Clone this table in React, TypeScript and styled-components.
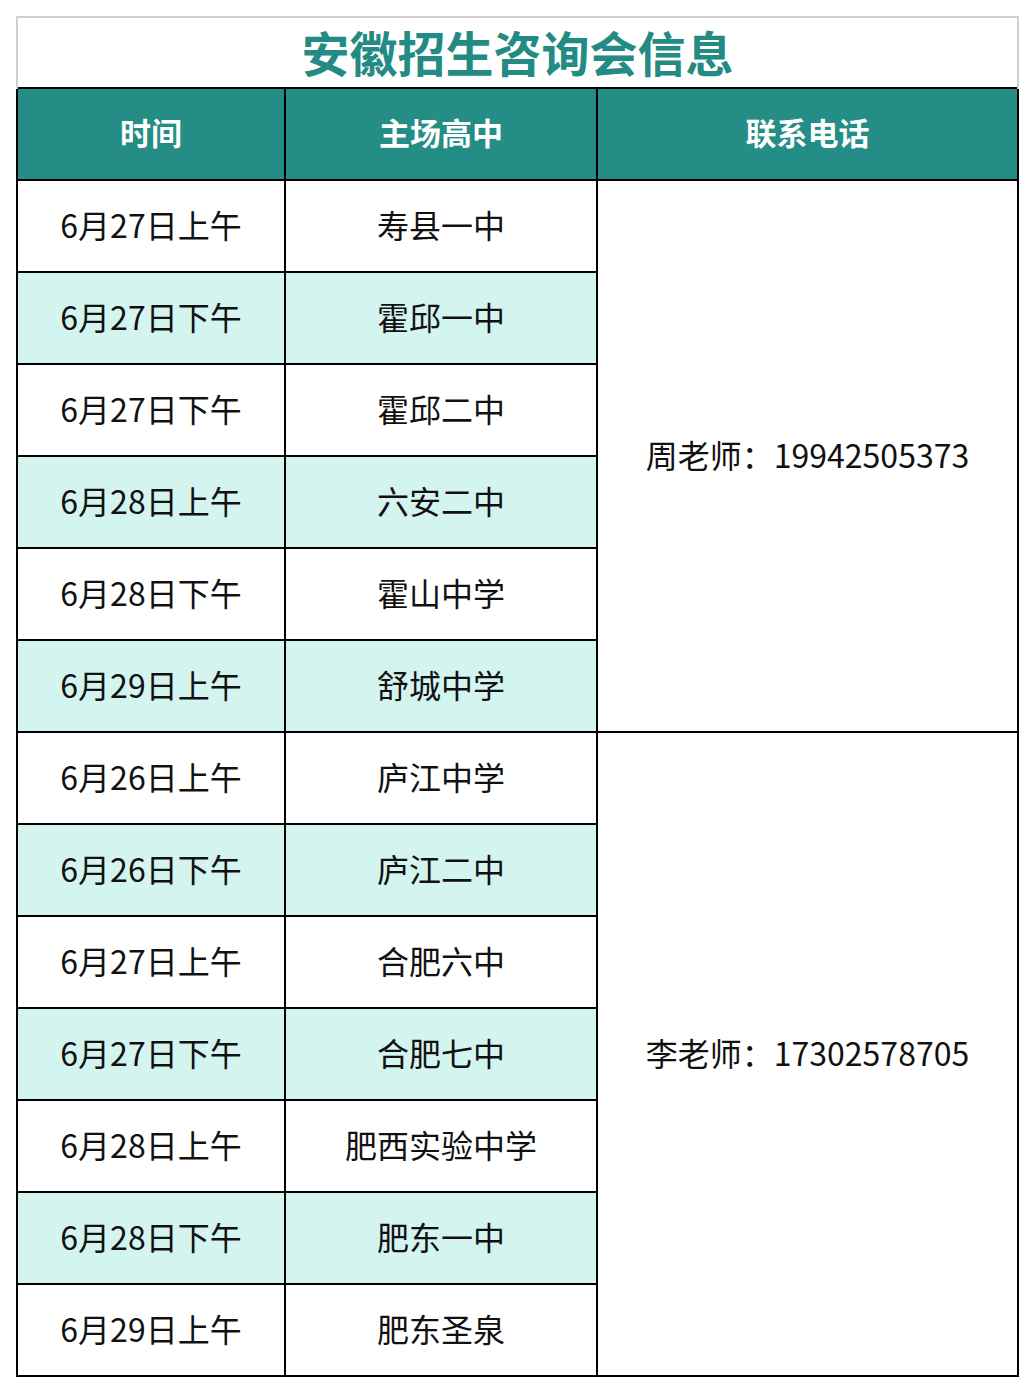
import React from "react";
import styled, { createGlobalStyle } from "styled-components";

const Global = createGlobalStyle`
  html, body { margin: 0; padding: 0; background: #fff; }
  body { font-family: "Noto Sans CJK SC", "Noto Sans", sans-serif; }
`;

const Page = styled.div`
  padding: 16px 0 16px 16px;
  width: 1034px;
  box-sizing: border-box;
`;

const Table = styled.table`
  border-collapse: collapse;
  table-layout: fixed;
  width: 1001px;
`;

const TitleCell = styled.td`
  height: 65px;
  padding: 0 0 4px;
  border: 2px solid #d0d0d0;
  border-bottom: none;
  text-align: center;
  vertical-align: middle;
  color: #238b83;
  font-size: 48px;
  font-weight: 700;
  line-height: 1;
`;

const Th = styled.th`
  height: 85px;
  padding: 0 0 5px;
  border: 2px solid #000;
  background: #248d85;
  color: #fff;
  font-size: 31px;
  font-weight: 700;
  text-align: center;
  vertical-align: middle;
`;

const Td = styled.td<{ $alt?: boolean }>`
  height: 85px;
  padding: 0 0 5px;
  border: 2px solid #000;
  background: ${(p) => (p.$alt ? "#d3f4ef" : "#fff")};
  color: #111;
  font-size: 32px;
  font-weight: 400;
  text-align: center;
  vertical-align: middle;
`;

const PhoneCell = styled(Td)`
  background: #fff;
`;

type Row = { time: string; school: string };

const group1: Row[] = [
  { time: "6月27日上午", school: "寿县一中" },
  { time: "6月27日下午", school: "霍邱一中" },
  { time: "6月27日下午", school: "霍邱二中" },
  { time: "6月28日上午", school: "六安二中" },
  { time: "6月28日下午", school: "霍山中学" },
  { time: "6月29日上午", school: "舒城中学" },
];

const group2: Row[] = [
  { time: "6月26日上午", school: "庐江中学" },
  { time: "6月26日下午", school: "庐江二中" },
  { time: "6月27日上午", school: "合肥六中" },
  { time: "6月27日下午", school: "合肥七中" },
  { time: "6月28日上午", school: "肥西实验中学" },
  { time: "6月28日下午", school: "肥东一中" },
  { time: "6月29日上午", school: "肥东圣泉" },
];

export default function App() {
  const renderGroup = (rows: Row[], offset: number, phone: string) =>
    rows.map((r, i) => {
      const alt = (offset + i) % 2 === 1;
      return (
        <tr key={`${offset}-${i}`}>
          <Td $alt={alt}>{r.time}</Td>
          <Td $alt={alt}>{r.school}</Td>
          {i === 0 && <PhoneCell rowSpan={rows.length}>{phone}</PhoneCell>}
        </tr>
      );
    });

  return (
    <Page>
      <Global />
      <Table>
        <colgroup>
          <col style={{ width: 268 }} />
          <col style={{ width: 312 }} />
          <col style={{ width: 421 }} />
        </colgroup>
        <tbody>
          <tr>
            <TitleCell colSpan={3}>安徽招生咨询会信息</TitleCell>
          </tr>
          <tr>
            <Th>时间</Th>
            <Th>主场高中</Th>
            <Th>联系电话</Th>
          </tr>
          {renderGroup(group1, 0, "周老师：19942505373")}
          {renderGroup(group2, 6, "李老师：17302578705")}
        </tbody>
      </Table>
    </Page>
  );
}
